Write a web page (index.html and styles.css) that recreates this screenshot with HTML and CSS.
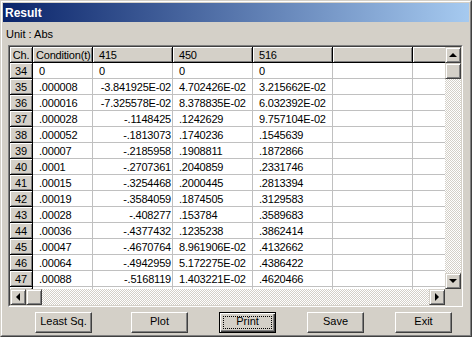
FILE: index.html
```html
<!DOCTYPE html>
<html lang="en">
<head>
    <meta charset="UTF-8">
    <title>Result</title>
    <link rel="stylesheet" href="styles.css">
</head>
<body>
    <div class="window">
        <div class="window-inner">
            <div class="title-bar">Result</div>
            <div class="unit">Unit : Abs</div>

            <div class="grid-frame">
                <div class="grid-frame-inner">
                    <div class="grid-view">
                        <table class="grid">
                            <tr class="head">
                                <th class="c-ch">Ch.</th>
                                <th class="c-cond">Condition(t)</th>
                                <th class="c-val">415</th>
                                <th class="c-val">450</th>
                                <th class="c-val">516</th>
                                <th class="c-val"></th>
                                <th class="c-val"></th>
                            </tr>
                            <tr><th>34</th><td>0</td><td>0</td><td>0</td><td>0</td><td></td><td></td></tr>
                            <tr><th>35</th><td>.000008</td><td class="num">-3.841925E-02</td><td>4.702426E-02</td><td>3.215662E-02</td><td></td><td></td></tr>
                            <tr><th>36</th><td>.000016</td><td class="num">-7.325578E-02</td><td>8.378835E-02</td><td>6.032392E-02</td><td></td><td></td></tr>
                            <tr><th>37</th><td>.000028</td><td class="num">-.1148425</td><td>.1242629</td><td>9.757104E-02</td><td></td><td></td></tr>
                            <tr><th>38</th><td>.000052</td><td class="num">-.1813073</td><td>.1740236</td><td>.1545639</td><td></td><td></td></tr>
                            <tr><th>39</th><td>.00007</td><td class="num">-.2185958</td><td>.1908811</td><td>.1872866</td><td></td><td></td></tr>
                            <tr><th>40</th><td>.0001</td><td class="num">-.2707361</td><td>.2040859</td><td>.2331746</td><td></td><td></td></tr>
                            <tr><th>41</th><td>.00015</td><td class="num">-.3254468</td><td>.2000445</td><td>.2813394</td><td></td><td></td></tr>
                            <tr><th>42</th><td>.00019</td><td class="num">-.3584059</td><td>.1874505</td><td>.3129583</td><td></td><td></td></tr>
                            <tr><th>43</th><td>.00028</td><td class="num">-.408277</td><td>.153784</td><td>.3589683</td><td></td><td></td></tr>
                            <tr><th>44</th><td>.00036</td><td class="num">-.4377432</td><td>.1235238</td><td>.3862414</td><td></td><td></td></tr>
                            <tr><th>45</th><td>.00047</td><td class="num">-.4670764</td><td>8.961906E-02</td><td>.4132662</td><td></td><td></td></tr>
                            <tr><th>46</th><td>.00064</td><td class="num">-.4942959</td><td>5.172275E-02</td><td>.4386422</td><td></td><td></td></tr>
                            <tr><th>47</th><td>.00088</td><td class="num">-.5168119</td><td>1.403221E-02</td><td>.4620466</td><td></td><td></td></tr>
                            <tr><th></th><td></td><td></td><td></td><td></td><td></td><td></td></tr>
                        </table>
                    </div>

                    <div class="vscroll">
                        <div class="sb-btn"><span class="arrow up"></span></div>
                        <div class="sb-btn"></div>
                        <div class="sb-track"></div>
                        <div class="sb-btn"><span class="arrow down"></span></div>
                    </div>

                    <div class="hscroll">
                        <div class="sb-btn"><span class="arrow left"></span></div>
                        <div class="sb-btn"></div>
                        <div class="sb-track"></div>
                        <div class="sb-btn"><span class="arrow right"></span></div>
                    </div>

                    <div class="corner"></div>
                </div>
            </div>

            <div class="buttons">
                <button class="btn">Least Sq.</button>
                <button class="btn">Plot</button>
                <button class="btn focused">Print</button>
                <button class="btn">Save</button>
                <button class="btn">Exit</button>
            </div>
        </div>
    </div>
</body>
</html>
```

FILE: styles.css
```css
body {
    margin: 0;
    background: #d4d0c8;
    font-family: 'Liberation Sans', Arial, sans-serif;
    font-size: 11px;
    color: #000;
}

.window {
    width: 472px;
    height: 337px;
    box-sizing: border-box;
    border: 1px solid;
    border-color: #d4d0c8 #404040 #404040 #d4d0c8;
    background: #d4d0c8;
}

.window-inner {
    height: 100%;
    box-sizing: border-box;
    border: 1px solid;
    border-color: #fff #808080 #808080 #fff;
    padding: 1px;
}

.title-bar {
    height: 19px;
    box-sizing: border-box;
    padding: 1px 0 0 2px;
    line-height: 18px;
    font-size: 12px;
    font-weight: bold;
    color: #fff;
    background: linear-gradient(to right, #0a246a, #a6caf0);
}

.unit {
    margin: 6px 0 0 3px;
    line-height: 13px;
}

/* sunken frame round the grid */
.grid-frame {
    width: 455px;
    height: 262px;
    box-sizing: border-box;
    margin: 4px 0 0 5px;
    border: 1px solid;
    border-color: #808080 #fff #fff #808080;
}

.grid-frame-inner {
    height: 100%;
    box-sizing: border-box;
    border: 1px solid;
    border-color: #404040 #d4d0c8 #d4d0c8 #404040;
    display: grid;
    grid-template-columns: 435px 16px;
    grid-template-rows: 242px 16px;
}

.grid-view {
    overflow: hidden;
    background: #fff;
}

.grid {
    table-layout: fixed;
    width: 483px;
    border-collapse: separate;
    border-spacing: 0;
    letter-spacing: -0.2px;
}

.grid th,
.grid td {
    box-sizing: border-box;
    height: 16px;
    padding: 2px 1px 0 6px;
    line-height: 13px;
    font-weight: normal;
    text-align: left;
    white-space: nowrap;
    overflow: hidden;
    border-right: 1px solid #c0c0c0;
    border-bottom: 1px solid #c0c0c0;
}

.grid th {
    background: #d4d0c8;
    border-right-color: #000;
    border-bottom-color: #000;
    box-shadow: inset 1px 1px #fff, inset -1px -1px #808080;
    text-align: center;
    padding-left: 0;
    padding-right: 0;
}

.grid .head th {
    padding-top: 1px;
    line-height: 14px;
}

.grid .head th.c-cond,
.grid .head th.c-val {
    text-align: left;
    padding-left: 6px;
}

.grid .head th.c-cond { padding-left: 3px; }

.c-ch { width: 23px; }
.c-cond { width: 60px; }
.c-val { width: 80px; }

.grid td.num {
    text-align: right;
}

/* scrollbars */
.vscroll {
    display: flex;
    flex-direction: column;
}

.hscroll {
    display: flex;
}

.sb-btn {
    width: 16px;
    height: 16px;
    flex: none;
    box-sizing: border-box;
    border: 1px solid;
    border-color: #d4d0c8 #404040 #404040 #d4d0c8;
    box-shadow: inset 1px 1px #fff, inset -1px -1px #808080;
    background: #d4d0c8;
    display: flex;
    align-items: center;
    justify-content: center;
}

.sb-track {
    flex: 1;
    background: repeating-conic-gradient(#fff 0 25%, #d4d0c8 0 50%) 0 0 / 2px 2px;
}

.corner {
    background: #d4d0c8;
}

.arrow {
    width: 0;
    height: 0;
    border: 0 solid transparent;
}

.arrow.up {
    border-width: 0 4px 4px;
    border-bottom-color: #000;
    margin-top: -1px;
}

.arrow.down {
    border-width: 4px 4px 0;
    border-top-color: #000;
}

.arrow.left {
    border-width: 4px 4px 4px 0;
    border-right-color: #000;
    margin-left: -1px;
}

.arrow.right {
    border-width: 4px 0 4px 4px;
    border-left-color: #000;
}

/* push buttons */
.buttons {
    display: flex;
    margin: 5px 0 0 32px;
    gap: 31px;
}

.buttons .btn:first-child {
    margin-right: 8px;
}

.btn {
    position: relative;
    width: 57px;
    height: 21px;
    box-sizing: border-box;
    padding: 0 0 2px;
    border: 1px solid;
    border-color: #fff #404040 #404040 #fff;
    box-shadow: inset -1px -1px #808080;
    background: #d4d0c8;
    font-family: inherit;
    font-size: 11px;
    line-height: 17px;
    color: #000;
}

.btn.focused {
    border-color: #000;
    box-shadow: inset 1px 1px #fff, inset -1px -1px #404040, inset -2px -2px #808080;
}

.btn.focused::after {
    content: '';
    position: absolute;
    top: 3px;
    left: 3px;
    right: 3px;
    bottom: 3px;
    border: 1px dotted #000;
}
```
